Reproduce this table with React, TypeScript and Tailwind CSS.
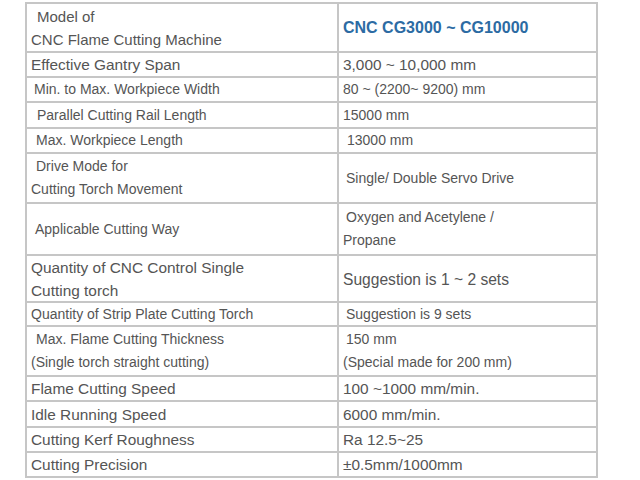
import React from 'react';

type Line = [string, number];

type Row = {
  h: string;
  left: Line[];
  right: Line[];
  ls: string;
  rs: string;
  head?: boolean;
};

const rows: Row[] = [
  {
    h: 'h-[47px]',
    left: [['Model of', 10], ['CNC Flame Cutting Machine', 4]],
    right: [['CNC CG3000 ~ CG10000', 4]],
    ls: 'text-[15px]',
    rs: 'text-[16px]',
    head: true,
  },
  { h: 'h-[25px]', left: [['Effective Gantry Span', 4]], right: [['3,000 ~ 10,000 mm', 4]], ls: 'text-[15.4px]', rs: 'text-[15.4px]' },
  { h: 'h-[25px]', left: [['Min. to Max. Workpiece Width', 7]], right: [['80 ~ (2200~ 9200) mm', 4]], ls: 'text-[14px]', rs: 'text-[14px]' },
  { h: 'h-[26px]', left: [['Parallel Cutting Rail Length', 10]], right: [['15000 mm', 4]], ls: 'text-[14px]', rs: 'text-[14px]' },
  { h: 'h-[25px]', left: [['Max. Workpiece Length', 9]], right: [['13000 mm', 8]], ls: 'text-[14px]', rs: 'text-[14px]' },
  {
    h: 'h-[50px]',
    left: [['Drive Mode for', 9], ['Cutting Torch Movement', 4]],
    right: [['Single/ Double Servo Drive', 7]],
    ls: 'text-[14px]',
    rs: 'text-[14px]',
  },
  {
    h: 'h-[52px]',
    left: [['Applicable Cutting Way', 8]],
    right: [['Oxygen and Acetylene /', 7], ['Propane', 4]],
    ls: 'text-[14px]',
    rs: 'text-[14px]',
  },
  {
    h: 'h-[47px]',
    left: [['Quantity of CNC Control Single', 4], ['Cutting torch', 4]],
    right: [['Suggestion is 1 ~ 2 sets', 4]],
    ls: 'text-[15.4px]',
    rs: 'text-[15.6px]',
  },
  { h: 'h-[24px]', left: [['Quantity of Strip Plate Cutting Torch', 4]], right: [['Suggestion is 9 sets', 7]], ls: 'text-[14px]', rs: 'text-[14px]' },
  {
    h: 'h-[50px]',
    left: [['Max. Flame Cutting Thickness', 9], ['(Single torch straight cutting)', 4]],
    right: [['150 mm', 7], ['(Special made for 200 mm)', 4]],
    ls: 'text-[14px]',
    rs: 'text-[14px]',
  },
  { h: 'h-[25px]', left: [['Flame Cutting Speed', 4]], right: [['100 ~1000 mm/min.', 4]], ls: 'text-[15.4px]', rs: 'text-[15.4px]' },
  { h: 'h-[26px]', left: [['Idle Running Speed', 4]], right: [['6000 mm/min.', 4]], ls: 'text-[15.4px]', rs: 'text-[15.4px]' },
  { h: 'h-[25px]', left: [['Cutting Kerf Roughness', 4]], right: [['Ra 12.5~25', 4]], ls: 'text-[15.4px]', rs: 'text-[15.4px]' },
  { h: 'h-[25px]', left: [['Cutting Precision', 4]], right: [['±0.5mm/1000mm', 4]], ls: 'text-[15.4px]', rs: 'text-[15.4px]' },
];

const Cell = ({ lines, size, head }: { lines: Line[]; size: string; head?: boolean }) => (
  <div className={`flex flex-col justify-center leading-[23px] ${size}`}>
    {lines.map(([text, pad]) => (
      <div
        key={text}
        style={{ paddingLeft: pad }}
        className={`whitespace-nowrap ${head ? 'font-bold text-[#2c6ba3]' : ''}`}
      >
        {text}
      </div>
    ))}
  </div>
);

const App = () => {
  return (
    <div
      className="w-[640px] h-[480px] bg-white pt-[2px] pl-[25px] text-[#555555]"
      style={{ fontFamily: '"Liberation Sans", Arial, sans-serif' }}
    >
      <div className="w-[573px] border-2 border-[#c6c6c6]">
        {rows.map((row, i) => (
          <div
            key={i}
            className={`grid grid-cols-[312px_257px] ${row.h} ${i > 0 ? 'border-t-2 border-[#c6c6c6]' : ''}`}
          >
            <div className="flex border-r-2 border-[#c6c6c6]">
              <Cell lines={row.left} size={row.ls} />
            </div>
            <div className="flex">
              <Cell lines={row.right} size={row.rs} head={row.head} />
            </div>
          </div>
        ))}
      </div>
    </div>
  );
};

export default App;
